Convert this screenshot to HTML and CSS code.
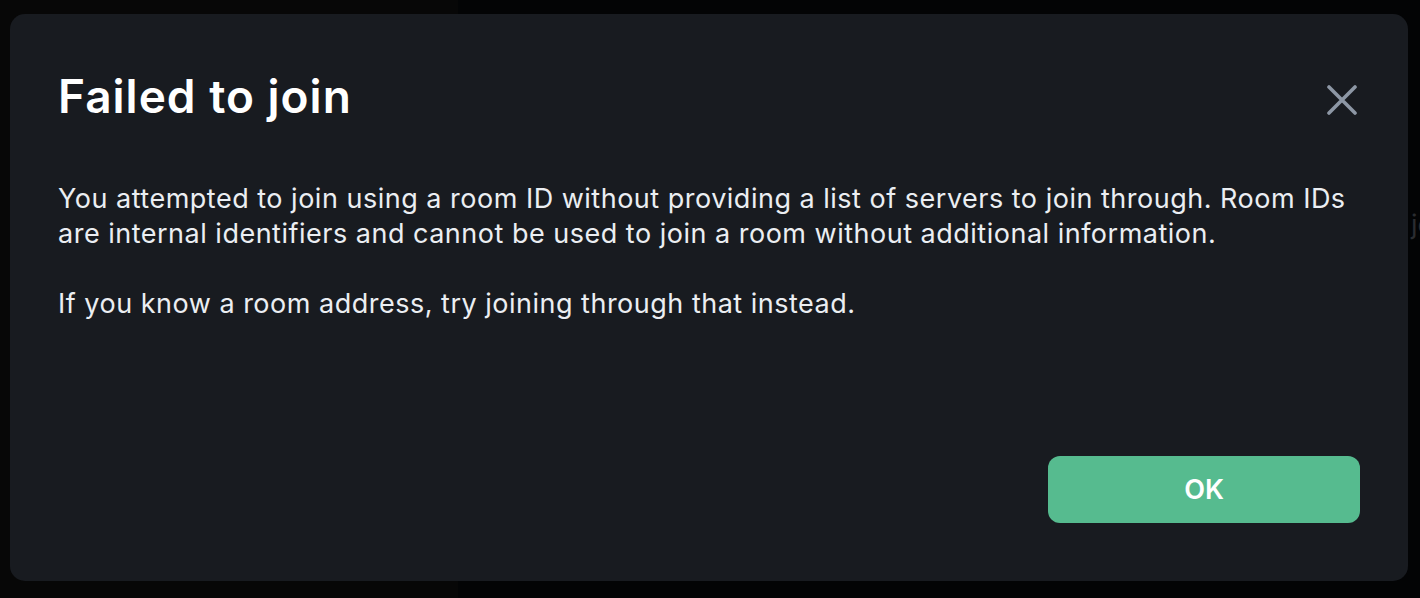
FILE: index.html
```html
<!DOCTYPE html>
<html>
<head>
<meta charset="utf-8">
<link rel="stylesheet" href="styles.css">
</head>
<body>
<div class="app">
  <div class="left-panel"></div>
  <div class="main-panel"><span class="ghost">jo</span></div>
</div>
<div class="dialog" role="dialog">
  <div class="dialog-header">
    <h1 class="dialog-title">Failed to join</h1>
    <button class="close-btn" aria-label="Close">
      <svg width="30" height="30" viewBox="0 0 30 30"><path d="M2 2 L28 28 M28 2 L2 28" stroke="#8d97a5" stroke-width="3.6" stroke-linecap="round" fill="none"/></svg>
    </button>
  </div>
  <div class="dialog-body">
    <p>You attempted to join using a room ID without providing a list of servers to join through. Room IDs are internal identifiers and cannot be used to join a room without additional information.</p>
    <p>If you know a room address, try joining through that instead.</p>
  </div>
  <div class="dialog-footer">
    <button class="ok-btn">OK</button>
  </div>
</div>
</body>
</html>
```
FILE: styles.css
```css
html, body {
  margin: 0;
  padding: 0;
  height: 100%;
  overflow: hidden;
  font-family: Inter, "Noto Sans", sans-serif;
}
.app {
  display: flex;
  height: 100%;
}
.left-panel {
  width: 458px;
  background: #070707;
}
.main-panel {
  flex: 1;
  background: #030405;
  position: relative;
}
.ghost {
  position: absolute;
  left: 953px;
  top: 208px;
  font-size: 27px;
  color: #2a2c30;
}
.dialog {
  position: absolute;
  left: 10px;
  top: 14px;
  width: 1398px;
  height: 567px;
  box-sizing: border-box;
  background: #181b20;
  border-radius: 15px;
  padding: 55px 48px 58px 48px;
  display: flex;
  flex-direction: column;
  color: #ebeef2;
}
.dialog-header {
  display: flex;
  align-items: flex-start;
  justify-content: space-between;
}
.dialog-title {
  margin: 0;
  font-size: 46px;
  line-height: 54px;
  font-weight: 600;
  letter-spacing: 1px;
  color: #ffffff;
}
.close-btn {
  background: none;
  border: none;
  padding: 0;
  margin-top: 16px;
  margin-right: 3px;
  width: 30px;
  height: 30px;
  display: flex;
}
.dialog-body {
  flex: 1;
  padding-top: 58px;
}
.dialog-body p {
  margin: 0 0 35px 0;
  font-size: 27px;
  line-height: 35px;
  letter-spacing: 0.5px;
}
.dialog-footer {
  display: flex;
  justify-content: flex-end;
}
.ok-btn {
  width: 312px;
  height: 67px;
  border: none;
  border-radius: 12px;
  background: #56bb8f;
  color: #ffffff;
  font-family: Inter, sans-serif;
  font-size: 27px;
  font-weight: 600;
}
```
